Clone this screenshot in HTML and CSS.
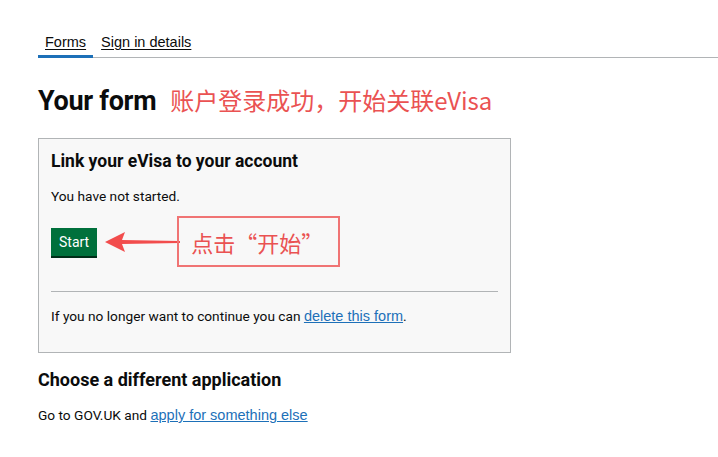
FILE: index.html
```html
<!DOCTYPE html>
<html lang="en">
<head>
<meta charset="utf-8">
<link rel="stylesheet" href="styles.css">
</head>
<body>
<div class="page">
  <nav class="tabs">
    <a class="tab tab-active" href="#">Forms</a>
    <a class="tab" href="#">Sign in details</a>
  </nav>
  <div class="title-row">
    <h1 class="title">Your form</h1>
    <span class="note-title">账户登录成功，开始关联eVisa</span>
  </div>
  <section class="card">
    <h2 class="card-title">Link your eVisa to your account</h2>
    <p class="text">You have not started.</p>
    <div class="start-row">
      <button class="btn">Start</button>
      <div class="callout">
        <svg class="arrow" width="76" height="22" viewBox="0 0 76 22">
          <path d="M0 11 L20 1 L17 9 L75 10 L75 12 L17 13 L20 21 Z" fill="#f24d4d"/>
        </svg>
        <span class="callout-box">点击“开始”</span>
      </div>
    </div>
    <hr class="rule">
    <p class="text">If you no longer want to continue you can <a class="link" href="#">delete this form</a>.</p>
  </section>
  <h2 class="sub-title">Choose a different application</h2>
  <p class="text">Go to GOV.UK and <a class="link" href="#">apply for something else</a></p>
</div>
</body>
</html>
```
FILE: styles.css
```css
body {
  margin: 0;
  background: #fff;
  font-family: Roboto, "Liberation Sans", sans-serif;
  color: #0b0c0c;
}
.page {
  padding: 33px 0 0 38px;
}
.tabs {
  display: flex;
  gap: 1px;
  border-bottom: 1px solid #b1b4b6;
}
.tab {
  font-family: "Liberation Sans", Arial, sans-serif;
  font-size: 14.5px;
  color: #0b0c0c;
  padding: 0 7px 4px;
  line-height: 18px;
  text-decoration: underline;
  text-underline-offset: 2px;
  border-bottom: 3px solid transparent;
  margin-bottom: -1px;
}
.tab-active {
  border-bottom-color: #1d70b8;
}
.title-row {
  display: flex;
  align-items: baseline;
  gap: 14px;
  margin-top: 24px;
}
.title {
  margin: 0;
  font-size: 27px;
  font-weight: 700;
  line-height: 36px;
  letter-spacing: -0.3px;
}
.note-title {
  font-family: "Noto Sans CJK SC", sans-serif;
  font-size: 24px;
  color: #ea5252;
}
.card {
  margin-top: 19px;
  width: 447px;
  padding: 11px 12px 26px;
  border: 1px solid #b1b4b6;
  background: #f8f8f8;
}
.card-title {
  margin: 0;
  font-size: 17.5px;
  font-weight: 700;
  line-height: 22px;
}
.text {
  margin: 0;
  font-size: 13.7px;
  line-height: 20px;
}
.card .text:first-of-type {
  margin-top: 14px;
}
.start-row {
  display: flex;
  align-items: center;
  margin-top: 10px;
}
.btn {
  font-family: Roboto, sans-serif;
  font-size: 14px;
  color: #fff;
  background: #00703c;
  border: 0;
  box-shadow: 0 2px 0 #002d18;
  padding: 5px 8px;
  line-height: 18px;
  margin: 0;
}
.callout {
  display: flex;
  align-items: center;
  margin-left: 8px;
}
.arrow {
  display: block;
}
.callout-box {
  font-family: "Noto Sans CJK SC", sans-serif;
  font-size: 22px;
  color: #ea5252;
  border: 2px solid #f07474;
  padding: 9px 12px 8px;
  line-height: 30px;
  width: 135px;
  margin-left: -4px;
}
.rule {
  border: 0;
  border-top: 1px solid #b1b4b6;
  margin: 24px 0 14px;
}
.link {
  font-family: "Liberation Sans", Arial, sans-serif;
  font-size: 14.5px;
  color: #1d70b8;
  text-decoration: underline;
}
.sub-title {
  margin: 14px 0 0;
  font-size: 18px;
  font-weight: 700;
  line-height: 26px;
}
.sub-title + .text {
  margin-top: 12px;
}
```
